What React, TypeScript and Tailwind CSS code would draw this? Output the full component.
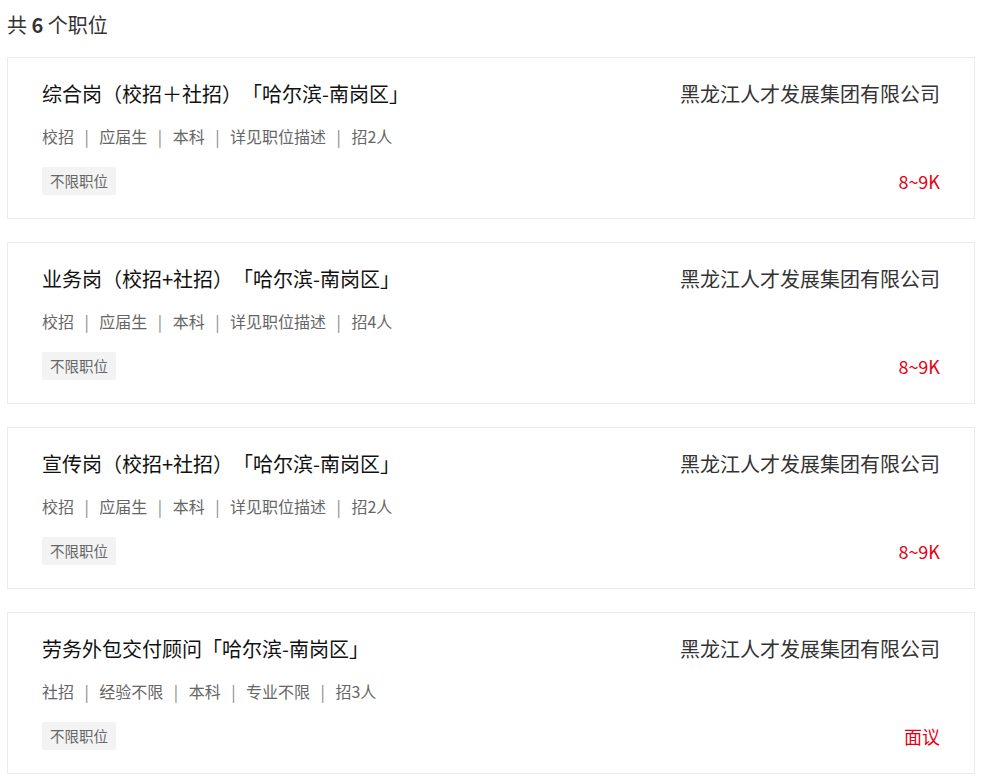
import React from 'react';

type Job = {
  title: string;
  company: string;
  tags: string[];
  label: string;
  salary: string;
};

const jobs: Job[] = [
  {
    title: '综合岗（校招＋社招）「哈尔滨-南岗区」',
    company: '黑龙江人才发展集团有限公司',
    tags: ['校招', '应届生', '本科', '详见职位描述', '招2人'],
    label: '不限职位',
    salary: '8~9K',
  },
  {
    title: '业务岗（校招+社招）「哈尔滨-南岗区」',
    company: '黑龙江人才发展集团有限公司',
    tags: ['校招', '应届生', '本科', '详见职位描述', '招4人'],
    label: '不限职位',
    salary: '8~9K',
  },
  {
    title: '宣传岗（校招+社招）「哈尔滨-南岗区」',
    company: '黑龙江人才发展集团有限公司',
    tags: ['校招', '应届生', '本科', '详见职位描述', '招2人'],
    label: '不限职位',
    salary: '8~9K',
  },
  {
    title: '劳务外包交付顾问「哈尔滨-南岗区」',
    company: '黑龙江人才发展集团有限公司',
    tags: ['社招', '经验不限', '本科', '专业不限', '招3人'],
    label: '不限职位',
    salary: '面议',
  },
];

const JobCard: React.FC<{ job: Job }> = ({ job }) => (
  <div className="flex justify-between border border-[#ebebeb] bg-white px-[34px] pt-[21px] pb-[23px]">
    {/* left side */}
    <div className="flex flex-col">
      <div className="text-[20px] leading-[30px] text-[#111] [text-spacing-trim:space-all]">{job.title}</div>
      <div className="mt-[15px] flex items-center text-[16px] leading-[24px] text-[#666]">
        {job.tags.map((tag, i) => (
          <React.Fragment key={i}>
            {i > 0 && <span className="mx-[10.5px] text-[#888]">|</span>}
            <span>{tag}</span>
          </React.Fragment>
        ))}
      </div>
      <div className="mt-[19px] flex">
        <span className="h-[28px] rounded-[2px] bg-[#f3f3f3] px-[8px] text-[14.5px] leading-[28px] text-[#666]">
          {job.label}
        </span>
      </div>
    </div>

    {/* right side */}
    <div className="flex flex-col items-end justify-between">
      <div className="text-[20px] leading-[30px] text-[#333]">{job.company}</div>
      <div className="text-[18px] leading-[28px] text-[#e60012]">{job.salary}</div>
    </div>
  </div>
);

export default function App() {
  return (
    <div
      className="min-h-screen bg-white pl-[7px] pr-[10px] pt-[10px]"
      style={{ fontFamily: '"Noto Sans CJK SC", "Noto Sans", sans-serif' }}
    >
      <div className="mb-[17px] text-[20px] leading-[30px] text-[#333]">
        共 <span className="font-bold">6</span> 个职位
      </div>
      <div className="flex flex-col gap-[23px] pb-[8px]">
        {jobs.map((job, i) => (
          <JobCard key={i} job={job} />
        ))}
      </div>
    </div>
  );
}
